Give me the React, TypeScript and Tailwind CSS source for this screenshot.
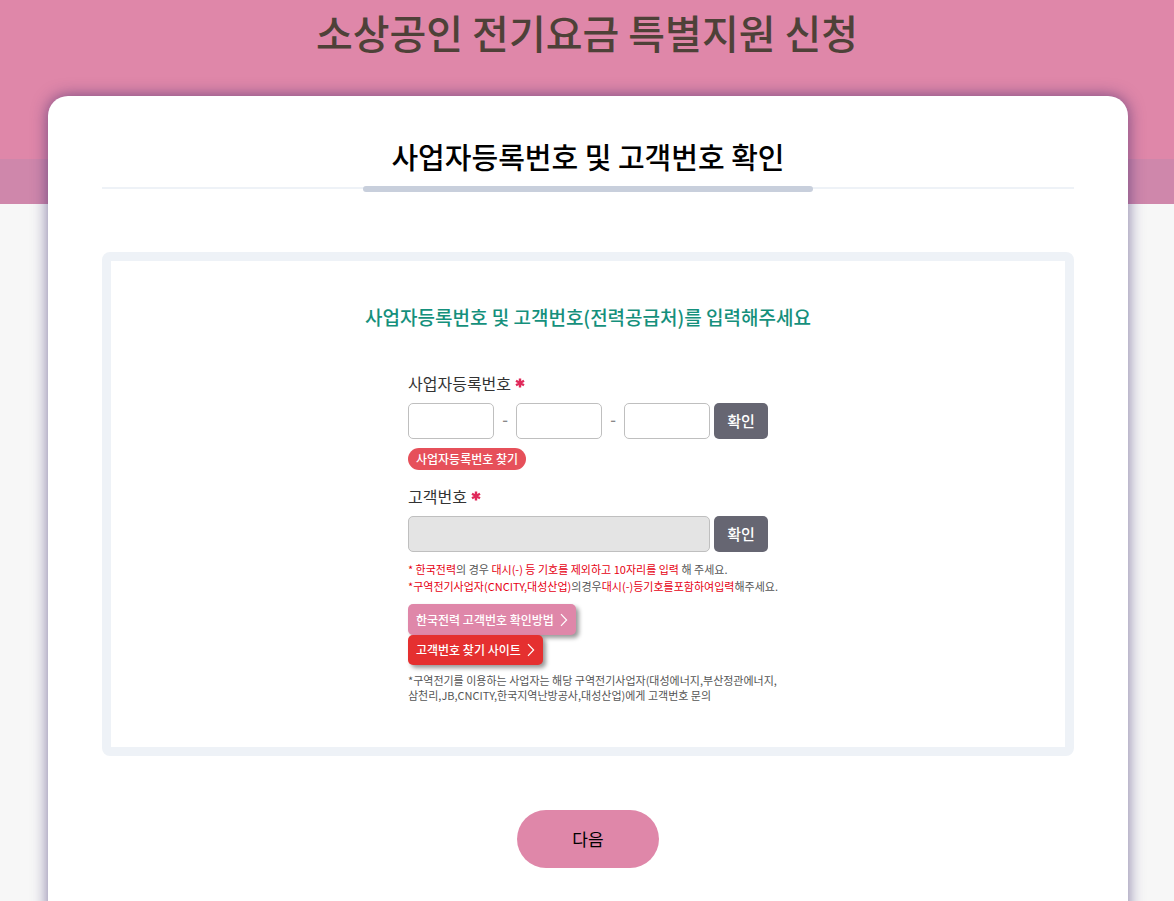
import type { ReactNode } from "react";

function Chevron() {
  return (
    <svg viewBox="0 0 8 14" className="h-3.5 w-2" fill="none" stroke="currentColor" strokeWidth="1.2" aria-hidden="true">
      <path d="M1 1.2 6.6 7 1 12.8" />
    </svg>
  );
}

function Required() {
  return (
    <svg viewBox="0 0 10 10" className="size-2.5" stroke="#e0295a" strokeWidth="2.4" aria-hidden="true">
      <path d="M5 0.5V9.5M1 2.8L9 7.2M9 2.8L1 7.2" />
    </svg>
  );
}

function ConfirmButton() {
  return (
    <button type="button" className="h-9 w-[54px] shrink-0 rounded-[5px] bg-[#666672] text-[15px] font-medium text-white">
      확인
    </button>
  );
}

function Red({ children }: { children: ReactNode }) {
  return <span className="text-[#e60012]">{children}</span>;
}

function Dash() {
  return <span className="w-[22px] pb-1 text-center text-[16px] font-medium text-[#888888]">-</span>;
}

const field = "h-9 min-w-0 flex-1 rounded-[5px] border border-[#bfbfbf] bg-white px-2 text-[15px]";

export default function App() {
  return (
    <div className="flex min-h-screen flex-col bg-[#f7f7f7] font-['Noto_Sans_CJK_KR',sans-serif] text-[#333333]">
      <header className="flex h-[204px] flex-col bg-[#df87a9]">
        <h1 className="flex-1 pt-0.5 text-center text-[40px] leading-[60px] font-medium text-[#4e4138]">
          소상공인 전기요금 특별지원 신청
        </h1>
        <div className="h-[45px] bg-[#cf87ab]" />
      </header>

      <main className="relative mx-[46px] -mt-[108px] ml-12 flex-1 rounded-t-[20px] bg-white px-[54px] pt-[38px] pb-24 shadow-[0_0_16px_rgba(45,30,100,0.6)]">
        <div className="relative border-b-2 border-[#eef2f7] pb-2 text-center">
          <h2 className="text-[29px] leading-[45px] font-medium text-black">사업자등록번호 및 고객번호 확인</h2>
          <span className="absolute -bottom-[5px] left-1/2 h-1.5 w-[450px] -translate-x-1/2 rounded-full bg-[#c8cfdc]" />
        </div>

        <section className="mt-[63px] rounded-lg border-[9px] border-[#eef2f7] pt-10 pb-11">
          <h3 className="text-center text-[19px] leading-8 font-medium text-[#15907c]">
            사업자등록번호 및 고객번호(전력공급처)를 입력해주세요
          </h3>

          <form className="mx-auto mt-9 w-[360px]">
            <label htmlFor="biz1" className="flex items-center gap-1 text-[16px] leading-7">
              사업자등록번호
              <Required />
            </label>
            <div className="mt-1.5 flex items-center gap-1">
              <div className="flex min-w-0 flex-1 items-center">
                <input id="biz1" className={field} />
                <Dash />
                <input aria-label="사업자등록번호" className={field} />
                <Dash />
                <input aria-label="사업자등록번호" className={field} />
              </div>
              <ConfirmButton />
            </div>
            <a href="#find" className="mt-[9px] flex h-[22px] w-fit items-center rounded-full bg-[#e6505a] px-2 text-[12px] font-medium text-white">
              사업자등록번호 찾기
            </a>

            <label htmlFor="customer" className="mt-3 flex items-center gap-1 text-[16px] leading-7">
              고객번호
              <Required />
            </label>
            <div className="mt-1.5 flex items-center gap-1">
              <input id="customer" disabled className="h-9 min-w-0 flex-1 rounded-[5px] border border-[#bfbfbf] bg-[#e4e4e4] px-2 text-[15px]" />
              <ConfirmButton />
            </div>

            <div className="mt-[9px] text-[11px] leading-[17px] whitespace-nowrap text-[#555555]">
              <p>
                <Red>* 한국전력</Red>의 경우 <Red>대시(-) 등 기호를 제외하고 10자리를 입력</Red> 해 주세요.
              </p>
              <p>
                <Red>*구역전기사업자(CNCITY,대성산업)</Red>의경우<Red>대시(-)등기호를포함하여입력</Red>해주세요.
              </p>
            </div>

            <div className="mt-[9px] flex flex-col items-start text-[12px] font-medium text-white">
              <a href="#guide" className="flex h-[31px] items-center gap-1.5 rounded-[5px] bg-[#df87a9] px-2 shadow-[3px_3px_4px_rgba(0,0,0,0.4)]">
                한국전력 고객번호 확인방법
                <Chevron />
              </a>
              <a href="#site" className="relative flex h-[30px] items-center gap-1.5 rounded-[5px] bg-[#e53030] px-2 shadow-[3px_3px_4px_rgba(0,0,0,0.4)]">
                고객번호 찾기 사이트
                <Chevron />
              </a>
            </div>

            <p className="mt-2 text-[11px] leading-[15px] whitespace-nowrap text-[#555555]">
              *구역전기를 이용하는 사업자는 해당 구역전기사업자(대성에너지,부산정관에너지,
              <br />
              삼천리,JB,CNCITY,한국지역난방공사,대성산업)에게 고객번호 문의
            </p>
          </form>
        </section>

        <button type="button" className="mx-auto mt-[54px] block h-[58px] w-[142px] rounded-full bg-[#df87a9] text-[17px] text-black">
          다음
        </button>
      </main>
    </div>
  );
}
